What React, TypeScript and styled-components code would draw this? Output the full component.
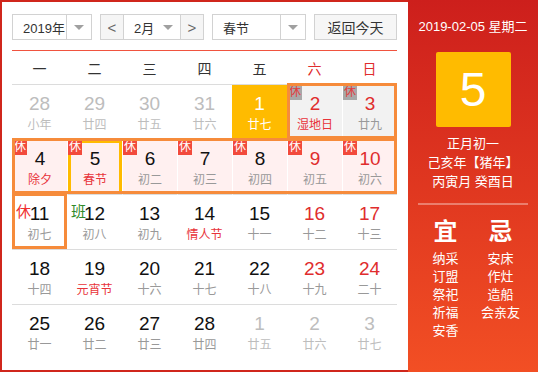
import React from "react";
import styled, { createGlobalStyle, css } from "styled-components";

const GlobalStyle = createGlobalStyle`
  body {
    margin: 0;
    background: #fff;
    font-family: "Liberation Sans", "Noto Sans CJK SC", sans-serif;
  }
`;

const Widget = styled.div`
  width: 538px;
  height: 372px;
  box-sizing: border-box;
  border: 2px solid #d0261c;
  display: flex;
`;

const Main = styled.div`
  width: 406px;
  box-sizing: border-box;
  padding: 12px 11px 0 10px;
`;

const Toolbar = styled.div`
  display: flex;
  gap: 8px;
  height: 26px;
  font-size: 13px;
  color: #333;
`;

const SelectBox = styled.div<{ $w: number }>`
  width: ${(p) => p.$w}px;
  box-sizing: border-box;
  border: 1px solid #d2d2d2;
  display: flex;
  align-items: center;
  background: #fff;
`;

const SelectText = styled.span`
  flex: 1;
  padding-left: 10px;
`;

const ArrowCell = styled.span<{ $line?: boolean }>`
  width: 24px;
  height: 100%;
  display: flex;
  align-items: center;
  justify-content: center;
  border-left: ${(p) => (p.$line ? "1px solid #d2d2d2" : "none")};
  &::after {
    content: "";
    border-left: 5px solid transparent;
    border-right: 5px solid transparent;
    border-top: 5px solid #a0a0a0;
  }
`;

const NavBtn = styled.span`
  width: 22px;
  height: 100%;
  display: flex;
  align-items: center;
  justify-content: center;
  background: #f5f5f5;
  color: #666;
  font-size: 15px;
  &:first-child {
    border-right: 1px solid #d2d2d2;
  }
  &:last-child {
    border-left: 1px solid #d2d2d2;
  }
`;

const TodayBtn = styled.div`
  flex: 1;
  box-sizing: border-box;
  border: 1px solid #d2d2d2;
  background: #f6f6f6;
  display: flex;
  align-items: center;
  justify-content: center;
  font-size: 14px;
`;

const RedLine = styled.div`
  height: 1px;
  background: #f0533f;
  margin-top: 10px;
`;

const WeekRow = styled.div`
  display: grid;
  grid-template-columns: repeat(7, 55px);
  height: 33px;
  border-bottom: 1px solid #dcdcdc;
`;

const WeekDay = styled.div<{ $red?: boolean }>`
  display: flex;
  align-items: center;
  justify-content: center;
  font-size: 14px;
  color: ${(p) => (p.$red ? "#e02d2d" : "#333")};
`;

const Grid = styled.div`
  display: grid;
  grid-template-columns: repeat(7, 55px);
  grid-template-rows: repeat(5, 55px);
`;

type Kind = "normal" | "other" | "today" | "rest" | "restGray";

const Cell = styled.div<{
  $kind: Kind;
  $row: number;
  $col: number;
  $sel?: boolean;
}>`
  grid-row: ${(p) => p.$row};
  grid-column: ${(p) => p.$col};
  position: relative;
  box-sizing: border-box;
  border-bottom: ${(p) => (p.$row === 5 ? "none" : "1px solid #dcdcdc")};
  display: flex;
  flex-direction: column;
  align-items: center;
  padding-top: 8px;
  ${(p) =>
    p.$kind === "today" &&
    css`
      background: #ffbb00;
      color: #fff;
    `}
  ${(p) =>
    p.$kind === "rest" &&
    css`
      background: #fff0f0;
      border-left: 1px solid #fff;
    `}
  ${(p) =>
    p.$kind === "restGray" &&
    css`
      background: #f2f2f2;
      border-left: 1px solid #fff;
    `}
  ${(p) =>
    p.$sel &&
    css`
      box-shadow: inset 0 0 0 3px #ffbb00;
    `}
`;

const Num = styled.div<{ $tone: string }>`
  font-size: 19px;
  line-height: 22px;
  color: ${(p) => p.$tone};
`;

const Lunar = styled.div<{ $tone: string }>`
  font-size: 12px;
  line-height: 16px;
  margin-top: 2px;
  color: ${(p) => p.$tone};
`;

const Badge = styled.span<{ $gray?: boolean }>`
  position: absolute;
  top: 0;
  left: 0;
  width: 14px;
  height: 15px;
  font-size: 12px;
  line-height: 15px;
  text-align: center;
  color: ${(p) => (p.$gray ? "#e23c3c" : "#fff")};
  background: ${(p) => (p.$gray ? "#a8a8a8" : "#f24a3c")};
`;

const Mark = styled.span<{ $green?: boolean }>`
  position: absolute;
  top: 8px;
  left: 4px;
  font-size: 15px;
  line-height: 18px;
  color: ${(p) => (p.$green ? "#2f8a2a" : "#f03030")};
`;

const Range = styled.div<{ $r: number; $c: number; $span: number }>`
  grid-row: ${(p) => p.$r};
  grid-column: ${(p) => `${p.$c} / span ${p.$span}`};
  border: 3px solid #f68b3b;
  margin: -2px 0 1px 0;
  z-index: 2;
  pointer-events: none;
`;

const Side = styled.div`
  width: 130px;
  margin: -2px -2px -2px 0;
  background: linear-gradient(180deg, #cd1f1c 0%, #f24f24 100%);
  color: #fff;
  display: flex;
  flex-direction: column;
  align-items: center;
  padding-top: 18px;
  box-sizing: border-box;
`;

const DateLine = styled.div`
  font-size: 13px;
  line-height: 18px;
`;

const BigDay = styled.div`
  width: 75px;
  height: 75px;
  margin-top: 16px;
  border-radius: 2px;
  background: #ffbb00;
  display: flex;
  align-items: center;
  justify-content: center;
  font-size: 48px;
`;

const InfoLine = styled.div<{ $first?: boolean }>`
  font-size: 13px;
  line-height: 19px;
  margin-top: ${(p) => (p.$first ? "7px" : "0")};
`;

const Sep = styled.div`
  width: 110px;
  height: 2px;
  margin-top: 12px;
  background: rgba(255, 255, 255, 0.35);
`;

const Advice = styled.div`
  display: grid;
  grid-template-columns: 55px 55px;
  margin-top: 12px;
`;

const AdviceCol = styled.div`
  display: flex;
  flex-direction: column;
  align-items: center;
`;

const AdviceHead = styled.div`
  font-size: 24px;
  line-height: 30px;
  font-weight: bold;
  margin-bottom: 3px;
`;

const AdviceItem = styled.div`
  font-size: 13px;
  line-height: 18px;
`;

type Day = {
  d: number;
  l: string;
  kind?: Kind;
  wk?: boolean;
  fest?: boolean;
  sel?: boolean;
  mark?: "rest" | "work";
};

const days: Day[] = [
  { d: 28, l: "小年", kind: "other" },
  { d: 29, l: "廿四", kind: "other" },
  { d: 30, l: "廿五", kind: "other" },
  { d: 31, l: "廿六", kind: "other" },
  { d: 1, l: "廿七", kind: "today" },
  { d: 2, l: "湿地日", kind: "restGray", wk: true, fest: true },
  { d: 3, l: "廿九", kind: "restGray", wk: true },
  { d: 4, l: "除夕", kind: "rest", fest: true },
  { d: 5, l: "春节", kind: "rest", fest: true, sel: true },
  { d: 6, l: "初二", kind: "rest" },
  { d: 7, l: "初三", kind: "rest" },
  { d: 8, l: "初四", kind: "rest" },
  { d: 9, l: "初五", kind: "rest", wk: true },
  { d: 10, l: "初六", kind: "rest", wk: true },
  { d: 11, l: "初七", mark: "rest" },
  { d: 12, l: "初八", mark: "work" },
  { d: 13, l: "初九" },
  { d: 14, l: "情人节", fest: true },
  { d: 15, l: "十一" },
  { d: 16, l: "十二", wk: true },
  { d: 17, l: "十三", wk: true },
  { d: 18, l: "十四" },
  { d: 19, l: "元宵节", fest: true },
  { d: 20, l: "十六" },
  { d: 21, l: "十七" },
  { d: 22, l: "十八" },
  { d: 23, l: "十九", wk: true },
  { d: 24, l: "二十", wk: true },
  { d: 25, l: "廿一" },
  { d: 26, l: "廿二" },
  { d: 27, l: "廿三" },
  { d: 28, l: "廿四" },
  { d: 1, l: "廿五", kind: "other" },
  { d: 2, l: "廿六", kind: "other" },
  { d: 3, l: "廿七", kind: "other" },
];

const weekNames = ["一", "二", "三", "四", "五", "六", "日"];
const good = ["纳采", "订盟", "祭祀", "祈福", "安香"];
const bad = ["安床", "作灶", "造船", "会亲友"];

function DayCell({ day, index }: { day: Day; index: number }) {
  const kind = day.kind || "normal";
  let numTone = day.wk ? "#e02d2d" : "#111";
  let lunarTone = day.fest ? "#e8333a" : "#999";
  if (kind === "other") {
    numTone = "#bdbdbd";
    lunarTone = "#bdbdbd";
  }
  if (kind === "today") {
    numTone = "#fff";
    lunarTone = "#fff";
  }
  return (
    <Cell
      $kind={kind}
      $row={Math.floor(index / 7) + 1}
      $col={(index % 7) + 1}
      $sel={day.sel}
    >
      {(kind === "rest" || kind === "restGray") && (
        <Badge $gray={kind === "restGray"}>休</Badge>
      )}
      {day.mark === "rest" && <Mark>休</Mark>}
      {day.mark === "work" && <Mark $green>班</Mark>}
      <Num $tone={numTone}>{day.d}</Num>
      <Lunar $tone={lunarTone}>{day.l}</Lunar>
    </Cell>
  );
}

export default function App() {
  return (
    <>
      <GlobalStyle />
      <Widget>
        <Main>
          <Toolbar>
            <SelectBox $w={80}>
              <SelectText>2019年</SelectText>
              <ArrowCell $line />
            </SelectBox>
            <SelectBox $w={104}>
              <NavBtn>&lt;</NavBtn>
              <SelectText>2月</SelectText>
              <ArrowCell />
              <NavBtn>&gt;</NavBtn>
            </SelectBox>
            <SelectBox $w={94}>
              <SelectText>春节</SelectText>
              <ArrowCell $line />
            </SelectBox>
            <TodayBtn>返回今天</TodayBtn>
          </Toolbar>
          <RedLine />
          <WeekRow>
            {weekNames.map((w, i) => (
              <WeekDay key={w} $red={i > 4}>
                {w}
              </WeekDay>
            ))}
          </WeekRow>
          <Grid>
            {days.map((day, i) => (
              <DayCell key={i} day={day} index={i} />
            ))}
            <Range $r={1} $c={6} $span={2} />
            <Range $r={2} $c={1} $span={7} />
            <Range $r={3} $c={1} $span={1} />
          </Grid>
        </Main>
        <Side>
          <DateLine>2019-02-05 星期二</DateLine>
          <BigDay>5</BigDay>
          <InfoLine $first>正月初一</InfoLine>
          <InfoLine>己亥年【猪年】</InfoLine>
          <InfoLine>丙寅月 癸酉日</InfoLine>
          <Sep />
          <Advice>
            <AdviceCol>
              <AdviceHead>宜</AdviceHead>
              {good.map((g) => (
                <AdviceItem key={g}>{g}</AdviceItem>
              ))}
            </AdviceCol>
            <AdviceCol>
              <AdviceHead>忌</AdviceHead>
              {bad.map((b) => (
                <AdviceItem key={b}>{b}</AdviceItem>
              ))}
            </AdviceCol>
          </Advice>
        </Side>
      </Widget>
    </>
  );
}
